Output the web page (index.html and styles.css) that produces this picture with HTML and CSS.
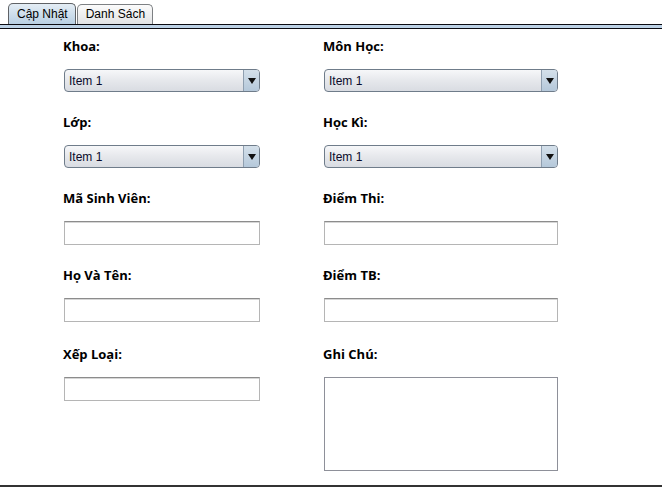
FILE: index.html
```html
<!DOCTYPE html>
<html>
<head>
<meta charset="utf-8">
<link rel="stylesheet" href="styles.css">
</head>
<body>
<div class="window">
  <div class="tabs">
    <div class="tab active">Cập Nhật</div>
    <div class="tab">Danh Sách</div>
  </div>
  <div class="strip"></div>
  <div class="form">
    <div class="col left">
      <div class="field">
        <div class="label">Khoa:</div>
        <div class="combo"><span class="combo-text">Item 1</span><span class="combo-btn"><svg width="8" height="6" viewBox="0 0 8 6"><path d="M0 0H8L4 6Z" fill="#111"/></svg></span></div>
      </div>
      <div class="field">
        <div class="label">Lớp:</div>
        <div class="combo"><span class="combo-text">Item 1</span><span class="combo-btn"><svg width="8" height="6" viewBox="0 0 8 6"><path d="M0 0H8L4 6Z" fill="#111"/></svg></span></div>
      </div>
      <div class="field">
        <div class="label">Mã Sinh Viên:</div>
        <div class="text"></div>
      </div>
      <div class="field">
        <div class="label">Họ Và Tên:</div>
        <div class="text"></div>
      </div>
      <div class="field r5">
        <div class="label">Xếp Loại:</div>
        <div class="text"></div>
      </div>
    </div>
    <div class="col right">
      <div class="field">
        <div class="label">Môn Học:</div>
        <div class="combo"><span class="combo-text">Item 1</span><span class="combo-btn"><svg width="8" height="6" viewBox="0 0 8 6"><path d="M0 0H8L4 6Z" fill="#111"/></svg></span></div>
      </div>
      <div class="field">
        <div class="label">Học Kì:</div>
        <div class="combo"><span class="combo-text">Item 1</span><span class="combo-btn"><svg width="8" height="6" viewBox="0 0 8 6"><path d="M0 0H8L4 6Z" fill="#111"/></svg></span></div>
      </div>
      <div class="field">
        <div class="label">Điểm Thi:</div>
        <div class="text"></div>
      </div>
      <div class="field">
        <div class="label">Điểm TB:</div>
        <div class="text"></div>
      </div>
      <div class="field r5">
        <div class="label">Ghi Chú:</div>
        <div class="area"></div>
      </div>
    </div>
  </div>
  <div class="bottom"></div>
</div>
</body>
</html>
```
FILE: styles.css
```css
html, body {
  margin: 0;
  padding: 0;
  background: #fff;
}
.window {
  width: 662px;
  height: 487px;
  display: flex;
  flex-direction: column;
  font-family: "Liberation Sans", Arial, sans-serif;
}
.tabs {
  display: flex;
  align-items: flex-end;
  padding-left: 8px;
  height: 24px;
  box-sizing: border-box;
}
.tab {
  height: 20px;
  box-sizing: border-box;
  padding: 0 7px 0 8px;
  border: 1px solid #7d8083;
  border-bottom: none;
  border-radius: 5px 5px 0 0;
  background: linear-gradient(#fbfbfb, #e2e3e5);
  font-size: 12px;
  line-height: 19px;
  color: #000;
  margin-right: 1px;
}
.tab.active {
  height: 21px;
  line-height: 20px;
  background: linear-gradient(#e4edf5, #b9cfe3);
  border-color: #5f6266;
}
.strip {
  height: 5px;
  box-sizing: border-box;
  border-top: 1px solid #0b0b12;
  border-bottom: 1px solid #0b0b12;
  background: #bdd2e6;
}
.form {
  flex: 1;
  display: grid;
  grid-template-columns: 260px 240px;
  padding-left: 63px;
  padding-top: 9px;
}
.col {
  display: flex;
  flex-direction: column;
  gap: 22px;
}
.field {
  display: flex;
  flex-direction: column;
  gap: 15px;
}
.field.r5 { margin-top: 2px; }
.label {
  font-family: "Open Sans", "Noto Sans", sans-serif;
  font-weight: 700;
  font-size: 13px;
  line-height: 17px;
  height: 16px;
  color: #000;
}
.combo {
  margin-left: 1px;
  height: 23px;
  box-sizing: border-box;
  border: 1px solid #6f7c8a;
  border-radius: 4px;
  background: linear-gradient(#f6f7f9, #e6e8ec 50%, #d9dce2);
  display: flex;
  align-items: stretch;
  overflow: hidden;
}
.left .combo { width: 196px; }
.right .combo { width: 234px; }
.combo-text {
  flex: 1;
  font-size: 12px;
  line-height: 22px;
  padding-left: 4px;
  color: #0a0a2a;
}
.combo-btn {
  width: 15px;
  border-left: 1px solid #8f9fb0;
  background: linear-gradient(#d4e0ea, #b5c8da);
  display: flex;
  align-items: center;
  justify-content: center;
}
.combo-btn svg { display: block; }
.text {
  margin-left: 1px;
  height: 24px;
  box-sizing: border-box;
  border: 1px solid #b5b5b5;
  border-top: 1px solid #8c8c8c;
  box-shadow: inset 0 1px 0 #d6d6d6;
  background: #fff;
}
.left .text { width: 196px; }
.right .text { width: 234px; }
.area {
  margin-left: 1px;
  width: 234px;
  height: 94px;
  box-sizing: border-box;
  border: 1px solid #8e9099;
  background: #fff;
}
.bottom {
  height: 2px;
  background: #333;
}
```
